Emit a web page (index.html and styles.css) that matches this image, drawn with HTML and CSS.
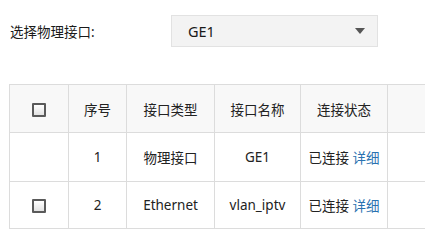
FILE: index.html
```html
<!DOCTYPE html>
<html lang="zh-CN">

<head>
  <meta charset="UTF-8">
  <meta name="viewport" content="width=device-width, initial-scale=1.0">
  <link rel="stylesheet" href="styles.css">
  <title>接口列表</title>
</head>

<body>
  <div class="main">
    <div class="field-row">
      <label class="field-label">选择物理接口:</label>
      <div class="select-box">
        <span class="select-value">GE1</span>
        <span class="select-arrow"></span>
      </div>
    </div>

    <table class="grid">
      <thead>
        <tr>
          <th class="col-check"><span class="check"></span></th>
          <th class="col-index">序号</th>
          <th class="col-type">接口类型</th>
          <th class="col-name">接口名称</th>
          <th class="col-state">连接状态</th>
          <th class="col-rest"></th>
        </tr>
      </thead>
      <tbody>
        <tr class="row-one">
          <td></td>
          <td>1</td>
          <td>物理接口</td>
          <td>GE1</td>
          <td>已连接 <a class="detail" href="#">详细</a></td>
          <td></td>
        </tr>
        <tr class="row-two">
          <td><span class="check"></span></td>
          <td>2</td>
          <td>Ethernet</td>
          <td>vlan_iptv</td>
          <td>已连接 <a class="detail" href="#">详细</a></td>
          <td></td>
        </tr>
      </tbody>
    </table>
  </div>
</body>

</html>
```

FILE: styles.css
```css
* {
  margin: 0;
  padding: 0;
  box-sizing: border-box;
}

body {
  font-family: "Noto Sans", "Noto Sans CJK SC", sans-serif;
  font-size: 13px;
  color: #222;
  background: #fff;
  overflow: hidden;
}

.main {
  width: 600px;
}

.field-row {
  display: flex;
  align-items: center;
  padding-top: 15px;
}

.field-label {
  width: 171px;
  padding-left: 10px;
  font-size: 13.5px;
  color: #1a1a1a;
}

.select-box {
  display: flex;
  align-items: center;
  justify-content: space-between;
  width: 207px;
  height: 32px;
  padding: 0 12px 0 16px;
  background: #f3f3f3;
  border: 1px solid #e2e2e2;
}

.select-value {
  font-size: 14.5px;
  color: #1a1a1a;
}

.select-arrow {
  width: 0;
  height: 0;
  border-left: 5px solid transparent;
  border-right: 5px solid transparent;
  border-top: 6px solid #555;
}

.grid {
  margin: 37px 0 0 9px;
  border-collapse: collapse;
  table-layout: fixed;
  font-size: 13.5px;
}

.grid th,
.grid td {
  border: 1px solid #dcdcdc;
  text-align: center;
  font-weight: normal;
  color: #222;
}

.grid thead tr {
  height: 48px;
  background: #f8f8f8;
}

.row-one {
  height: 49px;
}

.row-two {
  height: 47px;
}

.col-check { width: 59px; }
.col-index { width: 58px; }
.col-type { width: 88px; }
.col-name { width: 86px; }
.col-state { width: 87px; }
.col-rest { width: 80px; }

.check {
  display: inline-block;
  width: 14px;
  height: 14px;
  vertical-align: middle;
  border: 2px solid #5a5a5a;
  border-radius: 1px;
  background: linear-gradient(#ffffff, #e2e2e2);
}

.detail {
  color: #2a72b0;
  text-decoration: none;
}
```
